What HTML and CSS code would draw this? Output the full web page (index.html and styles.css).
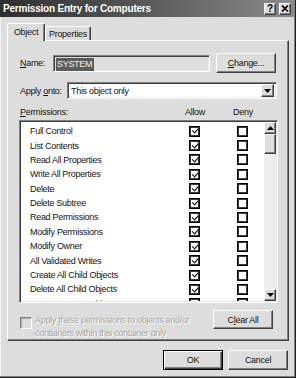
FILE: index.html
```html
<!DOCTYPE html>
<html lang="en">
  <head>
    <meta charset="utf-8" />
    <title>Permission Entry for Computers</title>
    <link rel="stylesheet" href="styles.css">
  </head>
  <body>
    <div class="window">
      <div class="titlebar">
        <span class="title">Permission Entry for Computers</span>
        <div class="title-buttons">
          <span class="tbtn help">?</span>
          <span class="tbtn">
            <svg width="8" height="7" viewBox="0 0 8 7"><path d="M1 0.5 L7 6.5 M7 0.5 L1 6.5" stroke="#000" stroke-width="1.7"/></svg>
          </span>
        </div>
      </div>

      <div class="tabs">
        <div class="tab active">Object</div>
        <div class="tab">Properties</div>
      </div>

      <div class="panel">
        <div class="row name-row">
          <span class="label name-label"><u>N</u>ame:</span>
          <div class="field readonly"><span class="selected">SYSTEM</span></div>
          <button class="btn change-btn"><u>C</u>hange...</button>
        </div>

        <div class="row apply-row">
          <span class="label apply-label">Apply <u>o</u>nto:</span>
          <div class="field combo">
            <span class="combo-text">This object only</span>
            <span class="combo-btn">
              <svg width="7" height="4" viewBox="0 0 7 4"><path d="M0 0 H7 L3.5 4 Z" fill="#000"/></svg>
            </span>
          </div>
        </div>

        <div class="perm-header">
          <span class="perm-title"><u>P</u>ermissions:</span>
          <span class="col-head">Allow</span>
          <span class="col-head deny-head">Deny</span>
        </div>

        <div class="list">
          <div class="rows">
            <div class="perm-row"><span class="perm-name">Full Control</span><span class="cb checked"></span><span class="cb"></span></div>
            <div class="perm-row"><span class="perm-name">List Contents</span><span class="cb checked"></span><span class="cb"></span></div>
            <div class="perm-row"><span class="perm-name">Read All Properties</span><span class="cb checked"></span><span class="cb"></span></div>
            <div class="perm-row"><span class="perm-name">Write All Properties</span><span class="cb checked"></span><span class="cb"></span></div>
            <div class="perm-row"><span class="perm-name">Delete</span><span class="cb checked"></span><span class="cb"></span></div>
            <div class="perm-row"><span class="perm-name">Delete Subtree</span><span class="cb checked"></span><span class="cb"></span></div>
            <div class="perm-row"><span class="perm-name">Read Permissions</span><span class="cb checked"></span><span class="cb"></span></div>
            <div class="perm-row"><span class="perm-name">Modify Permissions</span><span class="cb checked"></span><span class="cb"></span></div>
            <div class="perm-row"><span class="perm-name">Modify Owner</span><span class="cb checked"></span><span class="cb"></span></div>
            <div class="perm-row"><span class="perm-name">All Validated Writes</span><span class="cb checked"></span><span class="cb"></span></div>
            <div class="perm-row"><span class="perm-name">Create All Child Objects</span><span class="cb checked"></span><span class="cb"></span></div>
            <div class="perm-row"><span class="perm-name">Delete All Child Objects</span><span class="cb checked"></span><span class="cb"></span></div>
            <div class="perm-row"><span class="perm-name">Create account Objects</span><span class="cb checked"></span><span class="cb"></span></div>
          </div>
          <div class="scrollbar">
            <span class="sb-btn">
              <svg width="7" height="4" viewBox="0 0 7 4"><path d="M0 4 H7 L3.5 0 Z" fill="#000"/></svg>
            </span>
            <span class="sb-thumb"></span>
            <span class="sb-track"></span>
            <span class="sb-btn">
              <svg width="7" height="4" viewBox="0 0 7 4"><path d="M0 0 H7 L3.5 4 Z" fill="#000"/></svg>
            </span>
          </div>
        </div>

        <div class="bottom-row">
          <span class="cb-disabled"></span>
          <span class="disabled-text">Apply <u>t</u>hese permissions to objects and/or<br>containers within this container only</span>
          <button class="btn clear-btn">C<u>l</u>ear All</button>
        </div>
      </div>

      <div class="footer">
        <button class="btn default">OK</button>
        <button class="btn">Cancel</button>
      </div>
    </div>
  </body>
</html>
```

FILE: styles.css
```css
:root {
  --face: #dddddd;
  --light: #ffffff;
  --shadow: #808080;
  --dark: #404040;
  --text: #141414;
}

* {
  box-sizing: border-box;
}

body {
  margin: 0;
  width: 296px;
  height: 378px;
  font-family: "Liberation Sans", Arial, sans-serif;
  font-size: 9px;
  letter-spacing: -0.3px;
  color: var(--text);
  background: var(--face);
}

u {
  text-decoration: underline;
  text-underline-offset: 1px;
}

.window {
  width: 296px;
  height: 378px;
  background: var(--face);
  box-shadow: inset -1px -1px #202020, inset -2px -2px var(--shadow), inset 1px 1px #f2f2f2;
  display: flex;
  flex-direction: column;
}

/* title bar */
.titlebar {
  height: 17px;
  margin-right: 2px;
  display: flex;
  align-items: center;
  justify-content: space-between;
  background: linear-gradient(to right, #2f2f2f, #555555 45%, #8c8c8c);
}

.title {
  padding-left: 3px;
  color: #ffffff;
  font-weight: bold;
  font-size: 10px;
  letter-spacing: -0.2px;
}

.title-buttons {
  display: flex;
  gap: 3px;
  padding-right: 3px;
}

.tbtn {
  width: 12px;
  height: 12px;
  display: flex;
  align-items: center;
  justify-content: center;
  background: var(--face);
  border: 1px solid;
  border-color: var(--light) var(--dark) var(--dark) var(--light);
  box-shadow: inset -1px -1px var(--shadow);
  font-weight: bold;
  font-size: 10px;
  line-height: 1;
  color: #000;
}

/* tabs */
.tabs {
  display: flex;
  align-items: flex-end;
  height: 18px;
  margin-top: 6px;
  padding-left: 7px;
}

.tab {
  height: 15px;
  padding-top: 1px;
  border: 1px solid;
  border-bottom: none;
  border-color: var(--light) var(--dark) transparent var(--light);
  border-radius: 2px 2px 0 0;
  box-shadow: inset -1px 0 var(--shadow);
  background: var(--face);
  text-align: center;
  line-height: 12px;
}

.tab.active {
  width: 38px;
  height: 18px;
  padding-top: 2px;
  position: relative;
  z-index: 1;
}

.tab:not(.active) {
  width: 46px;
}

/* tab page */
.panel {
  margin-top: -1px;
  margin-left: 7px;
  width: 282px;
  height: 301px;
  padding: 12px 0 0 11px;
  border: 1px solid;
  border-color: var(--light) var(--dark) var(--dark) var(--light);
  box-shadow: inset -1px -1px var(--shadow);
  display: flex;
  flex-direction: column;
}

.row {
  display: flex;
  align-items: center;
}

.label {
  padding-left: 1px;
}

.name-row {
  height: 20px;
}

.name-label {
  width: 34px;
}

.field {
  border: 1px solid;
  border-color: var(--shadow) var(--light) var(--light) var(--shadow);
  box-shadow: inset 1px 1px var(--dark), inset -1px -1px #e8e8e8;
}

.readonly {
  width: 157px;
  height: 17px;
  padding: 2px 0 0 2px;
  background: var(--face);
}

.selected {
  display: inline-block;
  height: 13px;
  line-height: 13px;
  padding: 0 2px 0 1px;
  background: #5c5c5c;
  color: #f0f0f0;
}

.btn {
  font: inherit;
  letter-spacing: inherit;
  color: var(--text);
  background: var(--face);
  border: 1px solid;
  border-color: var(--light) var(--dark) var(--dark) var(--light);
  box-shadow: inset -1px -1px var(--shadow);
  padding: 0;
  width: 60px;
  height: 20px;
}

.change-btn {
  margin-left: 6px;
}

.apply-row {
  margin-top: 9px;
  height: 17px;
}

.apply-label {
  width: 48px;
}

.combo {
  width: 210px;
  height: 17px;
  background: #ffffff;
  display: flex;
  align-items: center;
  justify-content: space-between;
  padding: 0 2px 0 3px;
}

.combo-btn {
  width: 13px;
  height: 13px;
  display: flex;
  align-items: center;
  justify-content: center;
  background: var(--face);
  border: 1px solid;
  border-color: var(--light) var(--dark) var(--dark) var(--light);
  box-shadow: inset -1px -1px var(--shadow);
}

/* permissions list */
.perm-header {
  margin-top: 7px;
  height: 13px;
  display: flex;
  align-items: center;
}

.perm-title {
  width: 161px;
  padding-left: 1px;
}

.col-head {
  width: 30px;
  text-align: center;
}

.deny-head {
  margin-left: 18px;
}

.list {
  margin-top: 1px;
  width: 259px;
  height: 184px;
  background: #ffffff;
  border: 1px solid;
  border-color: var(--shadow) var(--light) var(--light) var(--shadow);
  box-shadow: inset 1px 1px var(--dark), inset -1px -1px #e8e8e8;
  padding: 1px;
  display: flex;
  overflow: hidden;
}

.rows {
  flex: 1;
  padding: 2px 0 0 9px;
  overflow: hidden;
}

.perm-row {
  height: 14.4px;
  display: flex;
  align-items: center;
}

.perm-name {
  width: 159px;
}

.cb {
  width: 11px;
  height: 11px;
  border: 1px solid #000000;
  box-shadow: inset 0 0 0 1px #3a3a3a;
  background: #ffffff;
  display: flex;
  align-items: center;
  justify-content: center;
}

.cb + .cb {
  margin-left: 37px;
}

.cb.checked::after {
  content: "";
  width: 5px;
  height: 2.5px;
  margin-top: -2px;
  border-left: 1.6px solid #000000;
  border-bottom: 1.6px solid #000000;
  transform: rotate(-48deg);
}

.scrollbar {
  width: 12px;
  display: flex;
  flex-direction: column;
  background: #eeeeee;
}

.sb-btn,
.sb-thumb {
  flex: none;
  background: var(--face);
  border: 1px solid;
  border-color: var(--light) var(--dark) var(--dark) var(--light);
  box-shadow: inset -1px -1px var(--shadow);
}

.sb-btn {
  height: 12px;
  display: flex;
  align-items: center;
  justify-content: center;
}

.sb-thumb {
  height: 20px;
}

.sb-track {
  flex: 1;
}

/* bottom of page */
.bottom-row {
  margin-top: 7px;
  display: flex;
  align-items: flex-start;
}

.cb-disabled {
  margin: 7px 0 0 1px;
  width: 12px;
  height: 12px;
  background: var(--face);
  border: 1px solid;
  border-color: var(--shadow) var(--light) var(--light) var(--shadow);
  box-shadow: inset 1px 1px #a8a8a8;
}

.disabled-text {
  width: 172px;
  margin-left: 3px;
  padding-top: 4px;
  line-height: 13px;
  color: #a6a6a6;
  text-shadow: 1px 1px #ffffff;
}

.clear-btn {
  margin-left: 6px;
  height: 19px;
}

.footer {
  margin-top: 9px;
  display: flex;
  justify-content: flex-end;
  gap: 5px;
  padding-right: 8px;
}

.btn.default {
  border-color: #000000;
  box-shadow: inset 1px 1px var(--light), inset -1px -1px var(--dark), inset -2px -2px var(--shadow);
}
```
